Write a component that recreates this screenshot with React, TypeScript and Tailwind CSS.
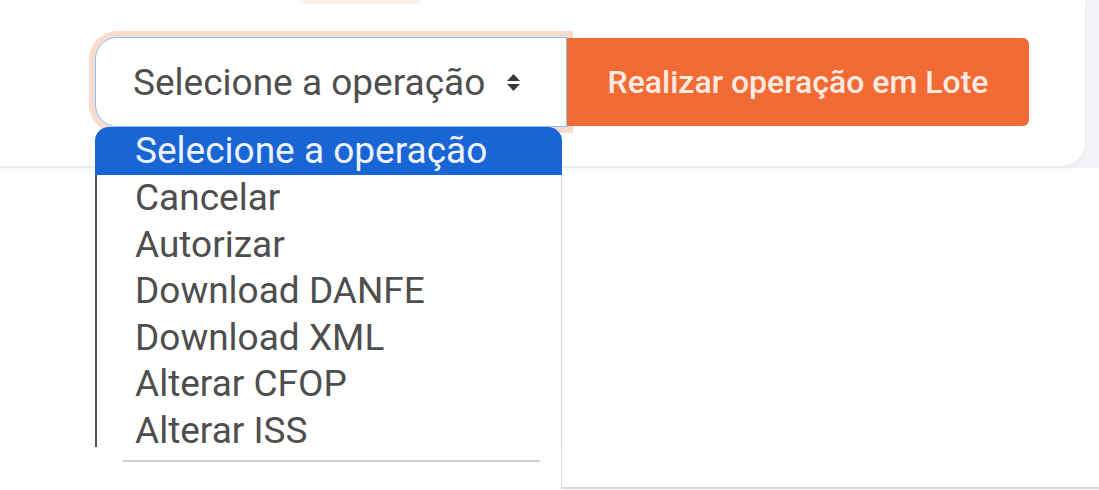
const options = [
  "Cancelar",
  "Autorizar",
  "Download DANFE",
  "Download XML",
  "Alterar CFOP",
  "Alterar ISS",
];

function SortArrows() {
  return (
    <svg width="15" height="19" viewBox="0 0 15 19" className="shrink-0">
      <path d="M7.5 1 L14 8 H1 Z" fill="#383838" />
      <path d="M7.5 18 L14 11 H1 Z" fill="#383838" />
    </svg>
  );
}

export default function App() {
  return (
    <div
      className="relative w-[1099px] h-[490px] overflow-hidden bg-white"
      style={{ fontFamily: "Roboto, 'Liberation Sans', sans-serif" }}
    >
      {/* top: card with the batch action row */}
      <div className="h-[168px] bg-[#f3f4f7]">
        <div className="w-[1085px] h-[166px] bg-white rounded-br-[24px] shadow-[0_2px_6px_rgba(0,0,0,0.05)]">
          <div className="ml-[300px] w-[120px] h-[4px] bg-[#fdf0e9] rounded-b-full" />
          <div className="flex pl-[95px] pt-[33px]">
            <div className="flex items-center w-[472px] h-[90px] pl-[37px] pr-[45px] bg-white border border-[#8fbdf6] rounded-l-[22px] ring-[6px] ring-[#f9dccf]">
              <span className="flex-1 text-[37px] text-[#4f4f4f] leading-none">
                Selecione a operação
              </span>
              <SortArrows />
            </div>
            <button className="w-[462px] h-[88px] mt-[1px] bg-[#f26b35] rounded-r-[6px] text-[32px] font-medium text-[#fdebe1]">
              Realizar operação em Lote
            </button>
          </div>
        </div>
      </div>

      {/* lower: leftover panels */}
      <div className="flex items-start">
        <div className="w-[123px]" />
        <div className="w-[417px] h-[294px] border-b-2 border-[#cfcfcf]" />
        <div className="w-[21px]" />
        <div className="flex-1 h-[321px] border-l border-b-2 border-[#d9d9d9]" />
      </div>

      {/* open select menu */}
      <div className="absolute left-[95px] top-[127px] w-[467px]">
        <div className="h-[48px] pl-[40px] bg-[#1a65d4] rounded-t-[14px] text-[37px] leading-[48px] text-[#eef4ff]">
          Selecione a operação
        </div>
        <div className="h-[272px] bg-white border-l-2 border-[#555] border-r border-r-[#d4d4d4]">
          {options.map((o) => (
            <div
              key={o}
              className="h-[46.5px] pl-[38px] text-[37px] leading-[46.5px] text-[#4e4e4e]"
            >
              {o}
            </div>
          ))}
        </div>
      </div>
    </div>
  );
}
